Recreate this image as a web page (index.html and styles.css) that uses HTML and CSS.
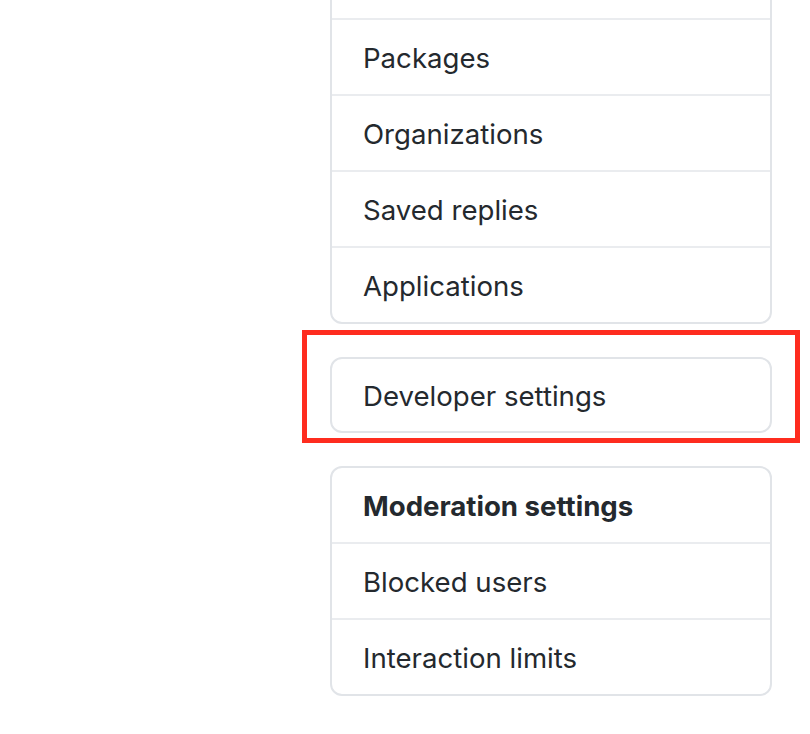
FILE: index.html
```html
<!DOCTYPE html>
<html>
<head>
<meta charset="utf-8">
<link rel="stylesheet" href="styles.css">
</head>
<body>
<div class="sidebar">
  <nav class="menu menu-first">
    <div class="menu-item">Security log</div>
    <div class="menu-item">Packages</div>
    <div class="menu-item">Organizations</div>
    <div class="menu-item">Saved replies</div>
    <div class="menu-item">Applications</div>
  </nav>
  <nav class="menu menu-dev">
    <div class="menu-item">Developer settings</div>
    <div class="highlight"></div>
  </nav>
  <nav class="menu">
    <div class="menu-item menu-heading">Moderation settings</div>
    <div class="menu-item">Blocked users</div>
    <div class="menu-item">Interaction limits</div>
  </nav>
</div>
</body>
</html>
```
FILE: styles.css
```css
html, body {
  margin: 0;
  padding: 0;
  background: #ffffff;
  overflow: hidden;
}
body {
  font-family: Inter, "Noto Sans", "Liberation Sans", sans-serif;
  color: #24292e;
}
.sidebar {
  margin-left: 330px;
  width: 442px;
  display: flex;
  flex-direction: column;
  gap: 33px;
}
.menu {
  position: relative;
  border: 2px solid #e1e4e8;
  border-radius: 12px;
  background: #fff;
}
.menu-first {
  margin-top: -58px;
}
.menu-item {
  height: 72px;
  box-sizing: content-box;
  display: flex;
  align-items: center;
  padding: 2px 30px 0 31px;
  font-size: 27.6px;
  border-top: 2px solid #eaecef;
}
.menu-item:first-child {
  border-top: 0;
}
.menu-dev .menu-item {
  height: 70px;
}
.menu-heading {
  font-weight: 700;
}
.highlight {
  position: absolute;
  left: -30px;
  top: -29px;
  width: 498px;
  height: 113px;
  box-sizing: border-box;
  border: 5px solid #fe2c1f;
}
```
